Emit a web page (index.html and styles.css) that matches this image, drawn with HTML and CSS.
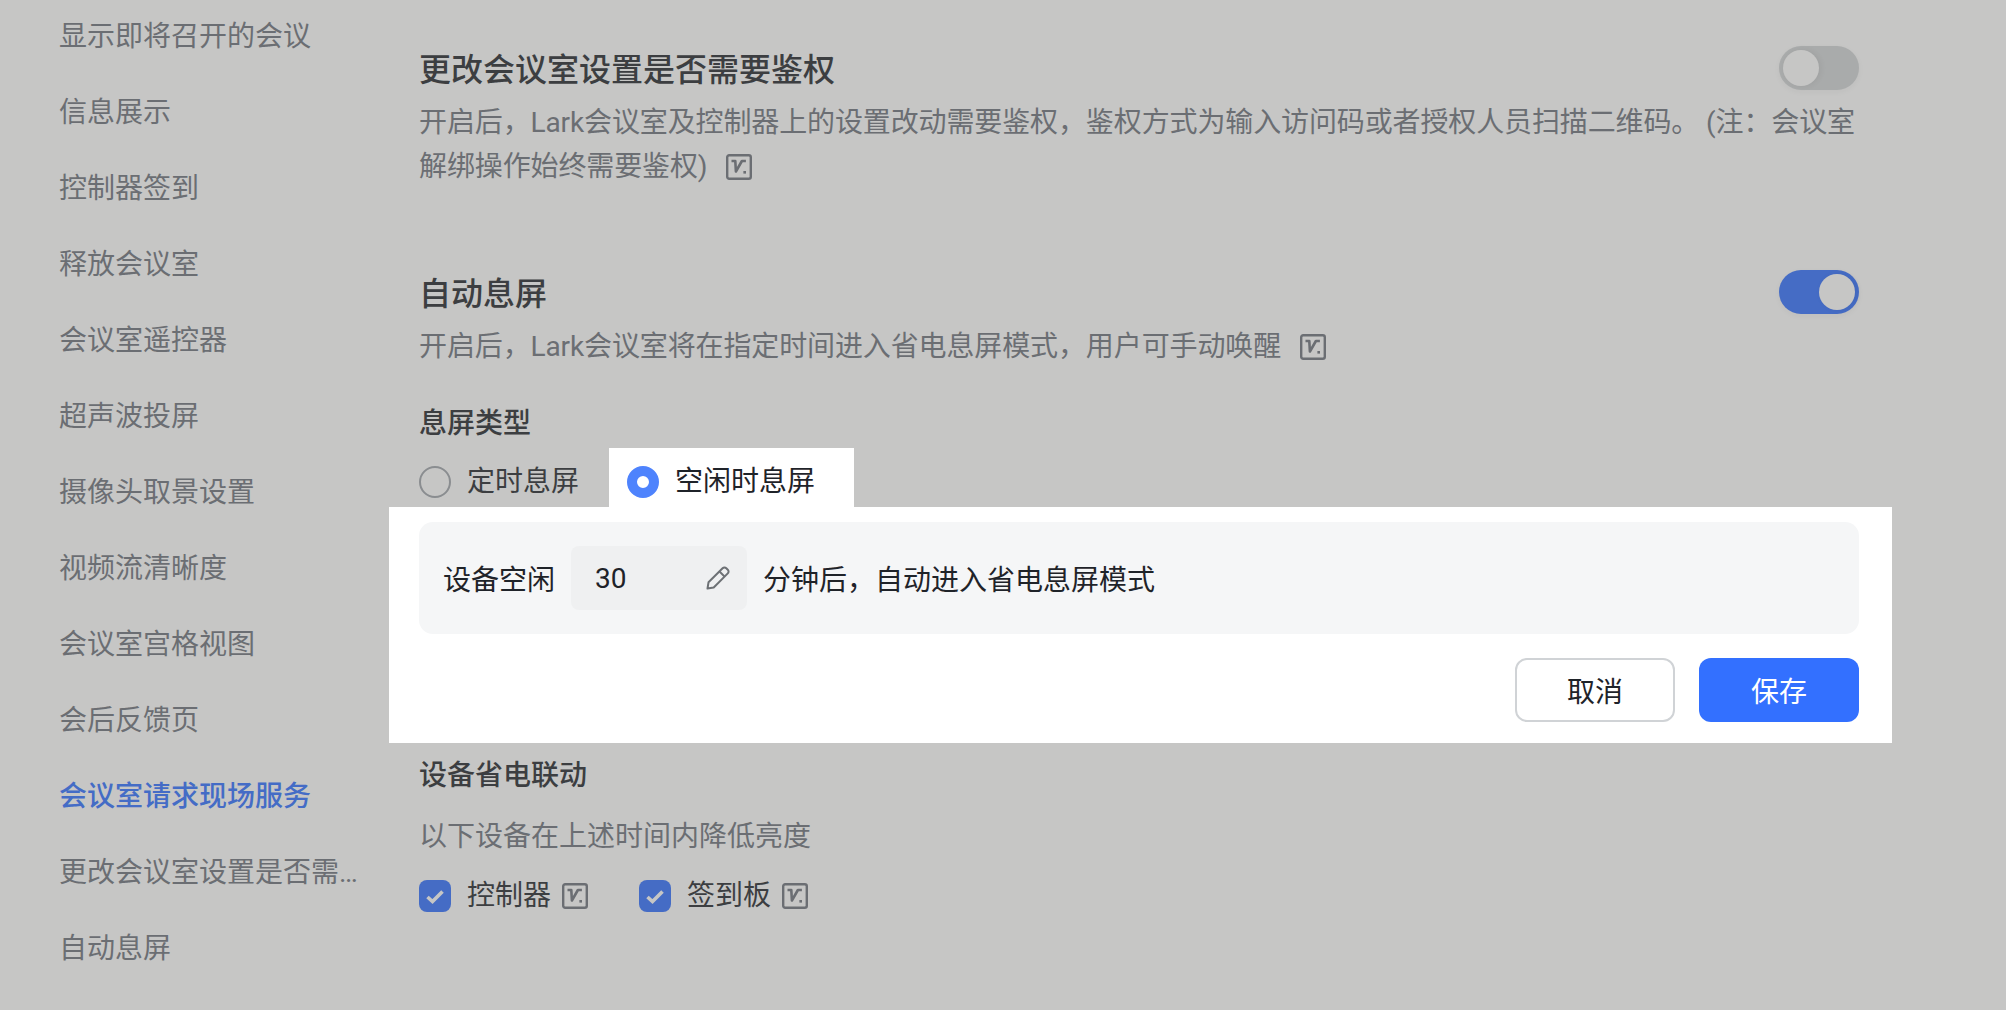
FILE: index.html
```html
<!DOCTYPE html>
<html lang="zh-CN">
<head>
    <meta charset="UTF-8">
    <title>Lark 会议室设置</title>
    <link rel="stylesheet" href="styles.css">
</head>
<body>
    <svg class="sprite" width="0" height="0">
        <symbol id="doc-icon" viewBox="0 0 26 26">
            <rect x="1.2" y="1.2" width="23.6" height="23.6" rx="2" fill="none" stroke="currentColor" stroke-width="2.4"/>
            <path d="M5.5 7h3.8l.6 10.5 6-10.5h4" fill="none" stroke="currentColor" stroke-width="2.6" stroke-linejoin="round"/>
            <rect x="17.4" y="17" width="2.6" height="2.6" fill="currentColor"/>
        </symbol>
    </svg>
    <div class="settings-page">
        <nav class="side-nav">
            <a class="nav-item">显示即将召开的会议</a>
            <a class="nav-item">信息展示</a>
            <a class="nav-item">控制器签到</a>
            <a class="nav-item">释放会议室</a>
            <a class="nav-item">会议室遥控器</a>
            <a class="nav-item">超声波投屏</a>
            <a class="nav-item">摄像头取景设置</a>
            <a class="nav-item">视频流清晰度</a>
            <a class="nav-item">会议室宫格视图</a>
            <a class="nav-item">会后反馈页</a>
            <a class="nav-item active">会议室请求现场服务</a>
            <a class="nav-item">更改会议室设置是否需要鉴权</a>
            <a class="nav-item">自动息屏</a>
        </nav>

        <main class="content">
            <section class="setting">
                <div class="setting-head">
                    <h2>更改会议室设置是否需要鉴权</h2>
                    <span class="switch"><span class="knob"></span></span>
                </div>
                <p class="setting-desc">开启后，Lark会议室及控制器上的设置改动需要鉴权，鉴权方式为输入访问码或者授权人员扫描二维码。 (注：会议室解绑操作始终需要鉴权)<svg class="doc-icon"><use href="#doc-icon"/></svg></p>
            </section>

            <section class="setting setting-sleep">
                <div class="setting-head">
                    <h2>自动息屏</h2>
                    <span class="switch on"><span class="knob"></span></span>
                </div>
                <p class="setting-desc">开启后，Lark会议室将在指定时间进入省电息屏模式，用户可手动唤醒<svg class="doc-icon"><use href="#doc-icon"/></svg></p>

                <h3 class="sub-title">息屏类型</h3>
                <div class="radio-row">
                    <label class="radio"><span class="radio-dot"></span>定时息屏</label>
                    <label class="radio checked"><span class="radio-dot"></span>空闲时息屏</label>
                </div>

                <div class="spotlight">
                    <div class="idle-box">
                        <span>设备空闲</span>
                        <div class="num-input">
                            <span>30</span>
                            <svg class="pencil" viewBox="0 0 24 24" width="24" height="24">
                                <path d="M1.5 22.5l1-6.2L16.6 2.2a2.6 2.6 0 0 1 3.7 0l1.5 1.5a2.6 2.6 0 0 1 0 3.7L7.7 21.5z" fill="none" stroke="currentColor" stroke-width="2" stroke-linejoin="round"/>
                                <path d="M13.5 5.5l5 5" fill="none" stroke="currentColor" stroke-width="2"/>
                            </svg>
                        </div>
                        <span>分钟后，自动进入省电息屏模式</span>
                    </div>
                    <div class="panel-actions">
                        <button class="btn">取消</button>
                        <button class="btn btn-primary">保存</button>
                    </div>
                </div>

                <h3 class="sub-title link-title">设备省电联动</h3>
                <p class="link-desc">以下设备在上述时间内降低亮度</p>
                <div class="check-row">
                    <label class="check">
                        <span class="check-box"><svg viewBox="0 0 32 32" width="32" height="32"><path d="M8.5 17l5 4.5 10-10" fill="none" stroke="currentColor" stroke-width="3.6"/></svg></span>控制器<svg class="doc-icon"><use href="#doc-icon"/></svg>
                    </label>
                    <label class="check">
                        <span class="check-box"><svg viewBox="0 0 32 32" width="32" height="32"><path d="M8.5 17l5 4.5 10-10" fill="none" stroke="currentColor" stroke-width="3.6"/></svg></span>签到板<svg class="doc-icon"><use href="#doc-icon"/></svg>
                    </label>
                </div>
            </section>
        </main>
    </div>
</body>
</html>
```

FILE: styles.css
```css
* {
    box-sizing: border-box;
}
html, body {
    height: 100%;
}
body {
    margin: 0;
    overflow: hidden;
    background-color: #c6c6c5;
    color: #3c3e41;
    font-family: Roboto, "Noto Sans CJK SC", sans-serif;
    font-size: 28px;
}
.sprite {
    display: block;
    height: 0;
}
.settings-page {
    display: flex;
    height: 100%;
}
.side-nav {
    flex: none;
    width: 419px;
    margin-top: -1px;
    padding-left: 59px;
    padding-right: 61px;
}
.nav-item {
    display: block;
    height: 76px;
    line-height: 76px;
    color: #6b6e73;
    white-space: nowrap;
    overflow: hidden;
    text-overflow: ellipsis;
}
.nav-item.active {
    color: #446cc6;
    font-weight: 500;
}
.content {
    flex: none;
    width: 1440px;
    padding-top: 46px;
}
.setting-sleep {
    margin-top: 81px;
}
.setting-head {
    display: flex;
    justify-content: space-between;
    align-items: center;
    height: 44px;
}
.setting-head h2 {
    margin: 0;
    padding-bottom: 3px;
    font-size: 32px;
    font-weight: 500;
    color: #3c3e41;
}
.setting-desc {
    margin: 11px 0 0;
    line-height: 44px;
    letter-spacing: -0.12px;
    color: #6b6e73;
}
.doc-icon {
    width: 26px;
    height: 26px;
    margin-left: 19px;
    vertical-align: -4px;
    color: #6b6e73;
}
.switch {
    display: flex;
    width: 80px;
    height: 44px;
    padding: 4px;
    border-radius: 22px;
    background-color: #a9abab;
    box-shadow: 0 2px 6px rgba(0,0,0,0.04);
}
.switch .knob {
    width: 36px;
    height: 36px;
    border-radius: 50%;
    background-color: #c6c6c5;
    box-shadow: 2px 0 6px rgba(0,0,0,0.06);
}
.switch.on {
    justify-content: flex-end;
    background-color: #456cc5;
}
.sub-title {
    margin: 35px 0 0;
    line-height: 40px;
    font-size: 28px;
    font-weight: 500;
}
.radio-row {
    display: flex;
    align-items: flex-end;
    margin-top: 4px;
}
.radio {
    display: flex;
    align-items: center;
    gap: 16px;
    height: 59px;
    padding-top: 9px;
    margin-right: 30px;
    line-height: 50px;
}
.radio-dot {
    flex: none;
    width: 32px;
    height: 32px;
    border: 2px solid #8a8d90;
    border-radius: 50%;
}
.radio.checked {
    margin-right: 0;
    padding-left: 18px;
    padding-right: 39px;
    background-color: #fff;
    color: #1f2329;
}
.radio.checked .radio-dot {
    border: 10px solid #4e83fd;
    background-color: #fff;
}
.spotlight {
    margin: 0 -33px 0 -30px;
    padding: 15px 33px 21px 30px;
    background-color: #fff;
    color: #1f2329;
}
.idle-box {
    display: flex;
    align-items: center;
    height: 112px;
    padding-left: 24px;
    border-radius: 14px;
    background-color: #f5f6f7;
}
.num-input {
    display: flex;
    justify-content: space-between;
    align-items: center;
    width: 176px;
    height: 64px;
    margin: 0 16px 0 16px;
    padding: 0 17px 0 24px;
    border-radius: 8px;
    background-color: #eff0f1;
}
.pencil {
    color: #6d7175;
}
.panel-actions {
    display: flex;
    justify-content: flex-end;
    gap: 24px;
    margin-top: 24px;
}
.btn {
    width: 160px;
    height: 64px;
    border: 2px solid #d0d3d6;
    border-radius: 12px;
    background-color: #fff;
    color: #1f2329;
    font-family: inherit;
    font-size: 28px;
}
.btn-primary {
    border: none;
    background-color: #3370ff;
    color: #fff;
}
.sub-title.link-title {
    margin-top: 13px;
}
.link-desc {
    margin: 19px 0 0;
    line-height: 44px;
    color: #6b6e73;
}
.check-row {
    display: flex;
    gap: 51px;
    margin-top: 21px;
}
.check {
    display: flex;
    align-items: center;
    line-height: 32px;
}
.check .doc-icon {
    margin-left: 11px;
    vertical-align: baseline;
}
.check-box {
    flex: none;
    display: flex;
    width: 32px;
    height: 32px;
    margin-right: 16px;
    border-radius: 8px;
    background-color: #456cc5;
    color: #c6c6c5;
}
```
